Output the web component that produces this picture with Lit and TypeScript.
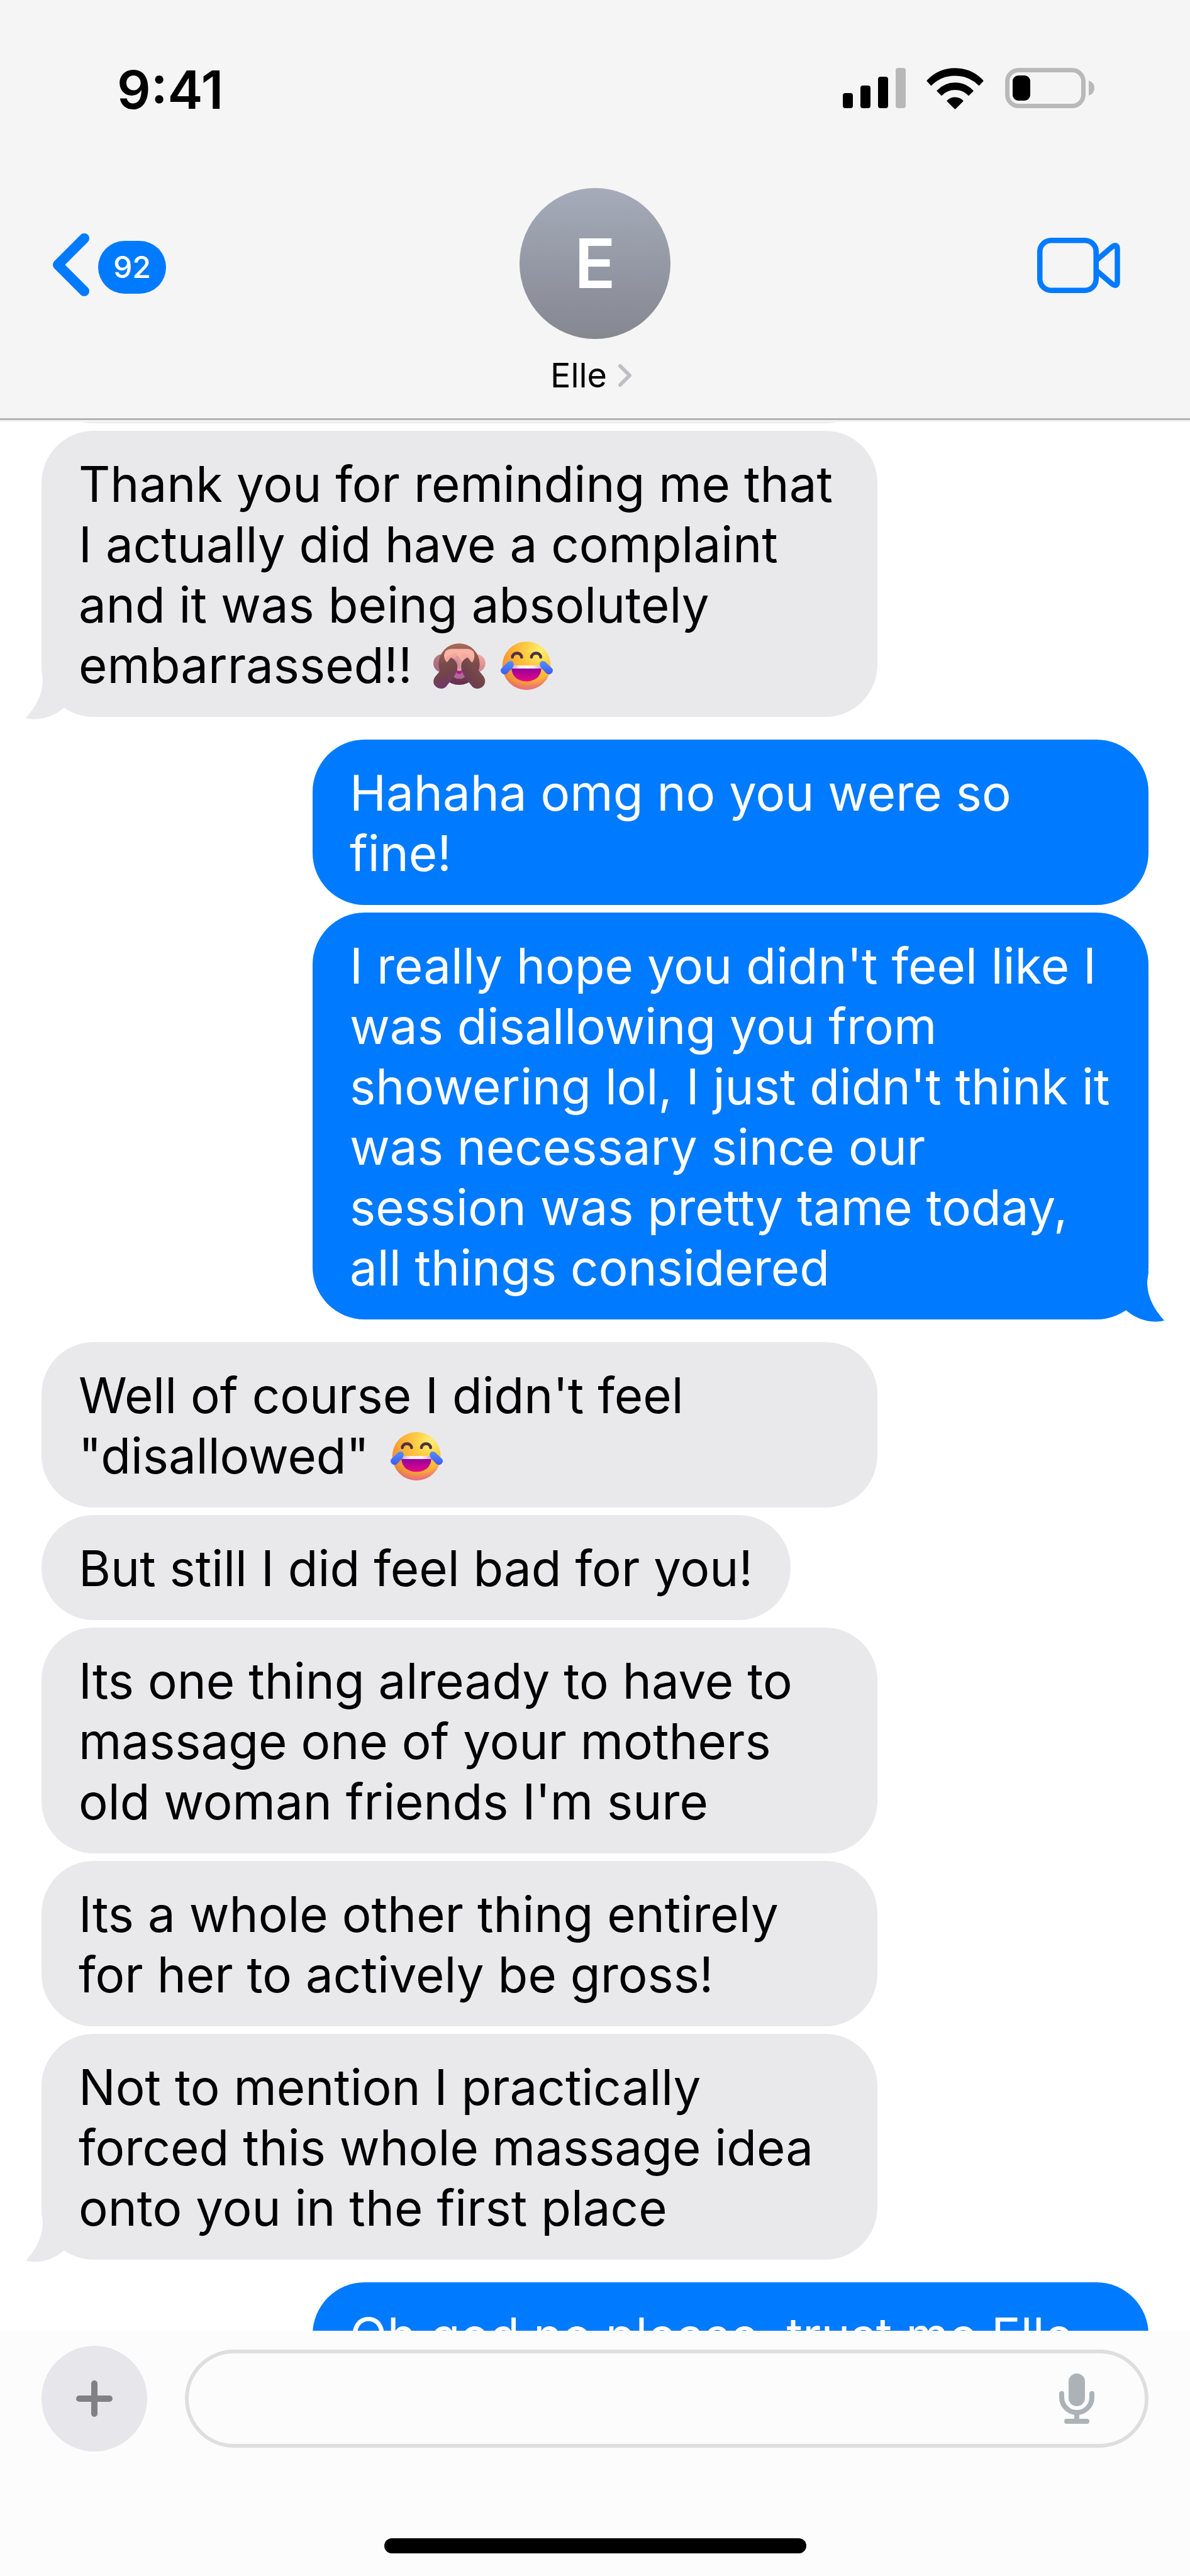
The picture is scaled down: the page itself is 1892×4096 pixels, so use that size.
import { LitElement, html, svg, css, TemplateResult } from 'lit';
import { customElement, property } from 'lit/decorators.js';
import { classMap } from 'lit/directives/class-map.js';

interface Message {
  from: 'me' | 'them';
  body: TemplateResult | string;
  last?: boolean;
  full?: boolean;
}

const monkey = html`<svg class="emoji" viewBox="56 60 321 240" role="img" aria-label="See-no-evil monkey">
    <defs>
      <linearGradient id="head" x1="0" y1="0" x2="0" y2="1">
        <stop offset="0" stop-color="#a86b59"/>
        <stop offset="0.5" stop-color="#7d4a4c"/>
        <stop offset="1" stop-color="#653050"/>
      </linearGradient>
      <linearGradient id="arm" x1="0" y1="0" x2="0.3" y2="1">
        <stop offset="0" stop-color="#7d5450"/>
        <stop offset="0.6" stop-color="#704548"/>
        <stop offset="1" stop-color="#74366a"/>
      </linearGradient>
      <linearGradient id="arm-right" x1="1" y1="0" x2="0.2" y2="1">
        <stop offset="0" stop-color="#8a5d58"/>
        <stop offset="0.6" stop-color="#704348"/>
        <stop offset="1" stop-color="#6f3263"/>
      </linearGradient>
      <linearGradient id="ear" x1="0" y1="0" x2="0" y2="1">
        <stop offset="0" stop-color="#b08078"/>
        <stop offset="1" stop-color="#a8608a"/>
      </linearGradient>
      <linearGradient id="ear-right" x1="0" y1="0" x2="0" y2="1">
        <stop offset="0" stop-color="#f3ab9c"/>
        <stop offset="1" stop-color="#cc8290"/>
      </linearGradient>
    </defs>
    <ellipse cx="134" cy="170" rx="42" ry="43" fill="url(#ear)"/>
    <ellipse cx="298" cy="170" rx="42" ry="43" fill="url(#ear-right)"/>
    <ellipse cx="215" cy="174" rx="98" ry="99" fill="url(#head)"/>
    <path fill="#b06890" d="M180 190H252V212Q248 244 216 244Q184 244 180 212Z"/>
    <path fill="#c400a2" d="M202 208H229Q226 221 215 221Q204 221 202 208Z"/>
    <path fill="#fab3a4" d="M176 101H256Q288 103 288 134Q286 166 262 176L216 206L170 174Q144 160 143 134Q144 103 176 101Z"/>
    <g fill="none" stroke-linecap="round">
      <path stroke="#f0a79d" stroke-width="18" d="M158 146L197 131M162 158L205 140"/>
      <path stroke="#dc979b" stroke-width="16" d="M196 150L218 186M206 143L228 172"/>
      <path stroke="#cf8c98" stroke-width="10" d="M204 158L216 194"/>
      <path stroke="#f4aaa0" stroke-width="18" d="M272 150L236 130M262 152L230 138"/>
    </g>
    <path fill="url(#arm)" d="M176 142C198 154 207 170 207 190C206 214 194 230 155 279C142 296 112 294 99 276C89 262 91 244 104 230L176 142Z"/>
    <path fill="url(#arm-right)" d="M255 142C234 152 224 166 225 190C226 214 238 230 276 279C289 296 319 294 332 276C342 262 341 244 328 228L255 142Z"/>
  </svg>`;

const joy = html`<svg class="emoji" viewBox="377 60 321 240" role="img" aria-label="Face with tears of joy">
    <defs>
      <radialGradient id="face" cx="0.78" cy="0.2" r="0.95">
        <stop offset="0" stop-color="#fff274"/>
        <stop offset="0.3" stop-color="#ffcf45"/>
        <stop offset="0.62" stop-color="#ffae35"/>
        <stop offset="0.86" stop-color="#f0923a"/>
        <stop offset="1" stop-color="#d9774e"/>
      </radialGradient>
      <radialGradient id="blush" cx="0.46" cy="0.05" r="0.97">
        <stop offset="0.82" stop-color="#e8609c" stop-opacity="0"/>
        <stop offset="1" stop-color="#e8609c" stop-opacity="0.9"/>
      </radialGradient>
      <linearGradient id="mouth" x1="0" y1="0" x2="0" y2="1">
        <stop offset="0" stop-color="#8f029b"/>
        <stop offset="1" stop-color="#e80589"/>
      </linearGradient>
      <linearGradient id="teeth" x1="0" y1="0" x2="1" y2="0">
        <stop offset="0" stop-color="#c79bdc"/>
        <stop offset="0.3" stop-color="#fbf3fc"/>
        <stop offset="0.7" stop-color="#fbf3fc"/>
        <stop offset="1" stop-color="#c79bdc"/>
      </linearGradient>
      <linearGradient id="tear" x1="0" y1="0" x2="0" y2="1">
        <stop offset="0" stop-color="#4c90fa"/>
        <stop offset="1" stop-color="#4058f6"/>
      </linearGradient>
    </defs>
    <circle cx="536.5" cy="181.5" r="115.5" fill="url(#face)"/>
    <circle cx="536.5" cy="181.5" r="115.5" fill="url(#blush)"/>
    <path fill="none" stroke="#50303f" stroke-width="14" stroke-linecap="round" d="M469 141A22 19 0 0 1 513 141M560 141A22 19 0 0 1 604 141"/>
    <path fill="url(#mouth)" d="M465 192H607C606 232 578 256 536 256C494 256 466 232 465 192Z"/>
    <path fill="url(#teeth)" d="M462 181H610L607 195H465Z"/>
    <path fill="url(#tear)" d="M444 168C454 156 470 157 474 168C478 178 474 186 466 195L446 216C436 226 422 224 416 214C411 206 412 198 419 192Z"/>
    <path fill="url(#tear)" d="M631 168C621 156 605 157 601 168C597 178 601 186 609 195L629 216C639 226 653 224 659 214C664 206 663 198 656 192Z"/>
  </svg>`;

const messages: Message[] = [
  { from: 'them', body: html`Thank you for reminding me that I actually did have a complaint and it was being absolutely embarrassed!! ${monkey}${joy}`, last: true },
  { from: 'me', body: 'Hahaha omg no you were so fine!' },
  { from: 'me', body: "I really hope you didn't feel like I was disallowing you from showering lol, I just didn't think it was necessary since our session was pretty tame today, all things considered", last: true },
  { from: 'them', body: html`Well of course I didn't feel "disallowed" ${joy}` },
  { from: 'them', body: 'But still I did feel bad for you!' },
  { from: 'them', body: "Its one thing already to have to massage one of your mothers old woman friends I'm sure" },
  { from: 'them', body: 'Its a whole other thing entirely for her to actively be gross!' },
  { from: 'them', body: 'Not to mention I practically forced this whole massage idea onto you in the first place', last: true },
  { from: 'me', body: 'Oh god no please, trust me Elle', full: true },
];

@customElement('status-bar')
export class StatusBar extends LitElement {
  static styles = css`
    :host{
      display:flex;
      align-items:center;
      justify-content:space-between;
      height:285px;
      padding: 0 152px 0 186px;
    }
    .time{
      font-size:84px;
      font-weight:600;
      line-height:96px;
    }
    .icons{
      display:flex;
      gap:33px;
    }
    svg{
      display:block;
      height:70px;
    }
  `

  render(){
    return html`
      <span class="time">9:41</span>
      <div class="icons">
        <svg width="100" viewBox="0 0 100 70" aria-hidden="true">
          <rect x="0" y="40" width="16" height="24" rx="4"/>
          <rect x="28" y="28" width="16" height="36" rx="4"/>
          <rect x="56" y="14" width="16" height="50" rx="4"/>
          <rect x="84" y="0" width="16" height="64" rx="4" fill="#b8b8b8"/>
        </svg>
        <svg width="92" viewBox="0 0 92 70" aria-hidden="true">
          <g stroke="#000" stroke-width="2" stroke-linejoin="round">
            <path d="M1.5 20.5A60 60 0 0 1 89.5 20.5L83.5 27A54.6 54.6 0 0 0 7.5 27Z"/>
            <path d="M17.5 36.5A38 38 0 0 1 73.5 36.5L67 43A30 30 0 0 0 24 43Z"/>
            <path d="M33.5 52.5A17 17 0 0 1 57.5 52.5L45.5 64.5Z"/>
          </g>
        </svg>
        <svg width="142" viewBox="0 0 142 70" aria-hidden="true">
          <rect x="3.5" y="3.5" width="121" height="57" rx="18" fill="none" stroke="#b9b9b9" stroke-width="7"/>
          <rect x="12" y="12" width="28" height="40" rx="9"/>
          <path fill="#b9b9b9" d="M133 20Q142 23 142 32Q142 41 133 44Z"/>
        </svg>
      </div>
    `
  }
}

@customElement('chat-header')
export class ChatHeader extends LitElement {
  @property()
  name = '';
  @property({type:Number})
  unread = 0;

  static styles = css`
    :host{
      display:block;
    }
    .bar{
      display:grid;
      grid-template-columns:1fr auto 1fr;
      padding: 14px 111px 36px 83px;
    }
    button{
      display:flex;
      align-items:center;
      border:none;
      padding:0;
      background:none;
      color:inherit;
      font:inherit;
      cursor:pointer;
    }
    svg{
      display:block;
      flex:none;
    }
    .side{
      height:240px;
      padding-top:12px;
      box-sizing:border-box;
    }
    .back{
      gap:14px;
      justify-self:start;
    }
    .video{
      justify-self:end;
    }
    .badge{
      box-sizing:border-box;
      min-width:108px;
      padding:0 24px;
      border-radius:42px;
      background:#007aff;
      color:#fff;
      font-size:48px;
      font-weight:500;
      line-height:84px;
      text-align:center;
    }
    .contact{
      flex-direction:column;
      gap:26px;
      margin-left:28px;
    }
    .avatar{
      width:240px;
      border-radius:50%;
      background:linear-gradient(#a5abb9, #858791);
      color:#fff;
      font-size:108px;
      font-weight:600;
      line-height:240px;
      text-align:center;
    }
    .name{
      display:flex;
      align-items:center;
      gap:18px;
      font-size:54px;
      line-height:64px;
    }
    .rule{
      height:3px;
      margin-bottom:3px;
      background:#b3b3b3;
    }
  `

  render(){
    return html`
      <div class="bar">
        <button class="side back" aria-label="Back, ${this.unread} unread">
          <svg width="59" height="108" viewBox="0 0 59 108" aria-hidden="true">
            <path fill="none" stroke="#007aff" stroke-width="16" stroke-linecap="round" stroke-linejoin="round" d="M51 8L9 50L51 92"/>
          </svg>
          <span class="badge">${this.unread}</span>
        </button>
        <button class="contact">
          <span class="avatar">${this.name.charAt(0)}</span>
          <span class="name">
            ${this.name}
            <svg width="34" height="36" viewBox="0 0 34 36" aria-hidden="true">
              <path fill="none" stroke="#bfbfc1" stroke-width="6" stroke-linecap="round" stroke-linejoin="round" d="M3 3L18 18L3 33"/>
            </svg>
          </span>
        </button>
        <button class="side video" aria-label="Video call">
          <svg width="132" height="94" viewBox="0 0 132 94" aria-hidden="true">
            <g fill="none" stroke="#007aff" stroke-width="8.5" stroke-linejoin="round">
              <rect x="4.25" y="4.25" width="89.5" height="79.5" rx="18"/>
              <path d="M94 36L118.5 15Q127.5 8.5 127.5 18V70Q127.5 79.5 118.5 73L94 52"/>
            </g>
          </svg>
        </button>
      </div>
      <div class="rule"></div>
    `
  }
}

@customElement('message-list')
export class MessageList extends LitElement {
  @property({attribute: false})
  messages: Message[] = [];

  static styles = css`
    :host{
      display:flex;
      flex-direction:column;
      overflow:hidden;
      padding:0 66px;
      background:#fff;
    }
    .bubble{
      position:relative;
      flex:none;
      box-sizing:border-box;
      max-width:calc(100% - 431px);
      margin-top:12px;
      padding:37px 60px 34px 59px;
      border-radius:83px;
      font-size:78px;
      line-height:96px;
    }
    .bubble.turn{
      margin-top:36px;
    }
    .bubble.full{
      width:100%;
    }
    .them{
      align-self:flex-start;
      background:#e9e9eb;
      color:#000;
    }
    .me{
      align-self:flex-end;
      background:#007aff;
      color:#fff;
    }
    /* the older message, scrolled up under the header */
    .older{
      height:168px;
      margin-top:-166px;
    }
    .emoji{
      width:107px;
      height:80px;
      vertical-align:-12px;
    }
    .tail{
      position:absolute;
      bottom:-4px;
      left:-26px;
      width:90px;
      height:84px;
    }
    .them .tail{
      fill:#e9e9eb;
    }
    .me .tail{
      left:auto;
      right:-26px;
      fill:#007aff;
      transform:scaleX(-1);
    }
  `

  renderTail(){
    return html`
      <svg class="tail" viewBox="-26 -80 90 84" aria-hidden="true">
        ${svg`<path d="M0 -77C0 -70 2 -66 2 -59C2 -35 -10 -15 -25 1.5C-19 4 10 8 36 -15L60 -30L40 -77Z"/>`}
      </svg>`;
  }

  render(){
    return html`
      <div class="bubble them full older"></div>
      ${this.messages.map((message, i)=>{
        const previous = this.messages[i - 1];
        const classes = {
          bubble: true,
          me: message.from == 'me',
          them: message.from == 'them',
          turn: !!previous && previous.from != message.from,
          full: !!message.full,
        };
        return html`<div class=${classMap(classes)}>${message.last ? this.renderTail() : ''}${message.body}</div>`;
      })}
    `
  }
}

@customElement('message-composer')
export class MessageComposer extends LitElement {
  static styles = css`
    :host{
      display:flex;
      flex-direction:column;
      gap:138px;
      padding:24px 66px 36px;
      background:#fcfcfc;
    }
    .row{
      display:flex;
      align-items:center;
      gap:60px;
    }
    button{
      display:flex;
      align-items:center;
      justify-content:center;
      flex:none;
      border:none;
      padding:0;
      background:none;
      cursor:pointer;
    }
    .add{
      width:168px;
      height:168px;
      border-radius:50%;
      background:#e7e6eb;
    }
    .field{
      display:flex;
      flex:1;
      align-items:center;
      box-sizing:border-box;
      height:156px;
      padding:0 80px 0 60px;
      border:6px solid #dedede;
      border-radius:78px;
    }
    input{
      flex:1;
      min-width:0;
      border:none;
      outline:none;
      padding:0;
      background:none;
      font:inherit;
      font-size:78px;
    }
    .home{
      align-self:center;
      width:671px;
      height:24px;
      border-radius:12px;
      background:#000;
    }
  `

  render(){
    return html`
      <div class="row">
        <button class="add" aria-label="Add attachment">
          <svg width="58" height="58" viewBox="0 0 58 58" aria-hidden="true">
            <path stroke="#808085" stroke-width="10" stroke-linecap="round" d="M29 5V53M5 29H53"/>
          </svg>
        </button>
        <div class="field">
          <input type="text" aria-label="Message">
          <button aria-label="Dictate">
            <svg width="56" height="80" viewBox="0 0 56 80" aria-hidden="true">
              <g fill="#abb3b7">
                <rect x="15" y="0" width="26" height="52" rx="13"/>
                <rect x="24" y="62" width="8" height="14"/>
                <rect x="8" y="72" width="40" height="8" rx="4"/>
              </g>
              <path fill="none" stroke="#abb3b7" stroke-width="8" stroke-linecap="round" d="M4 32V38A24 24 0 0 0 52 38V32"/>
            </svg>
          </button>
        </div>
      </div>
      <div class="home"></div>
    `
  }
}

@customElement('app-root')
export class AppRoot extends LitElement {
  static styles = css`
    :host{
      display:flex;
      flex-direction:column;
      height:100vh;
      background:#fff;
      color:#000;
      font-family:Inter, "Liberation Sans", sans-serif;
    }
    header{
      flex:none;
      background:#f5f5f5;
    }
    message-list{
      flex:1;
      min-height:0;
    }
    message-composer{
      flex:none;
    }
  `

  render(){
    return html`
      <header>
        <status-bar></status-bar>
        <chat-header name="Elle" unread="92"></chat-header>
      </header>
      <message-list .messages=${messages}></message-list>
      <message-composer></message-composer>
    `
  }
}
